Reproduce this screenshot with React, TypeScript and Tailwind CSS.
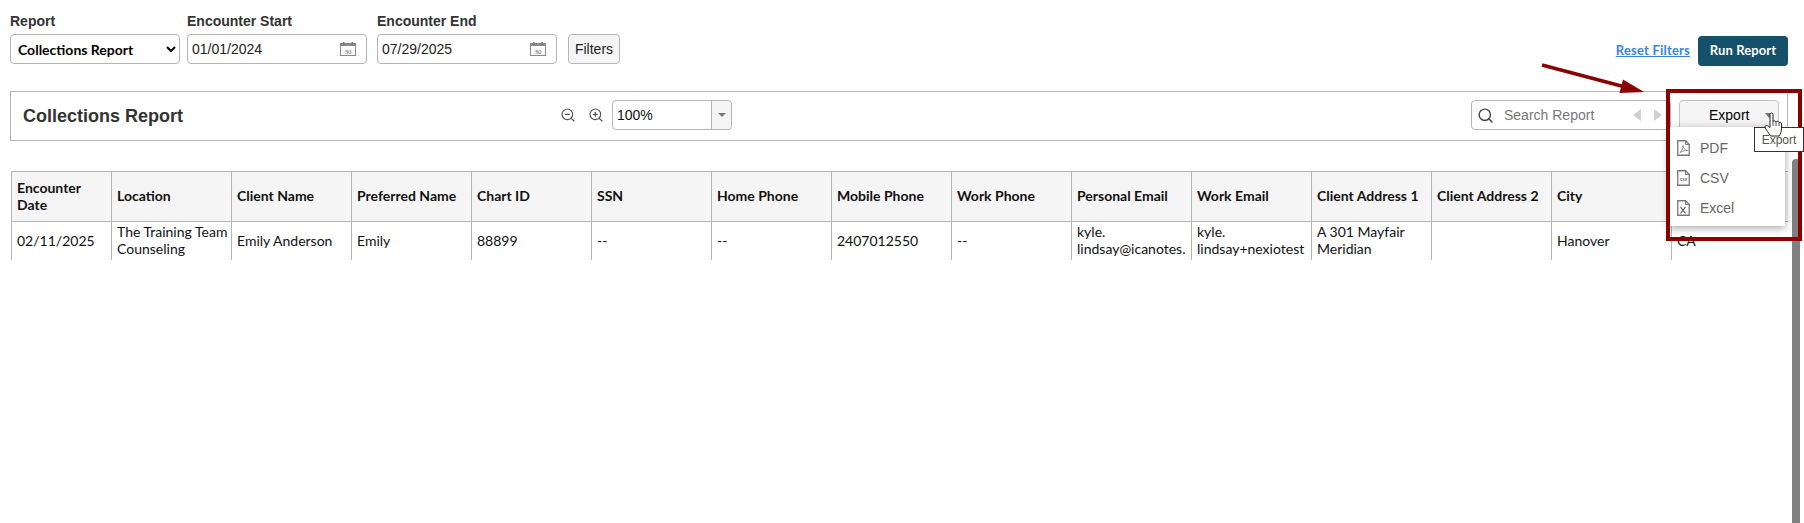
import { Search, ZoomIn, ZoomOut } from "lucide-react";

const columns = [
  "Encounter Date",
  "Location",
  "Client Name",
  "Preferred Name",
  "Chart ID",
  "SSN",
  "Home Phone",
  "Mobile Phone",
  "Work Phone",
  "Personal Email",
  "Work Email",
  "Client Address 1",
  "Client Address 2",
  "City",
  "",
];

const row = [
  ["02/11/2025"],
  ["The Training Team", "Counseling"],
  ["Emily Anderson"],
  ["Emily"],
  ["88899"],
  ["--"],
  ["--"],
  ["2407012550"],
  ["--"],
  ["kyle.", "lindsay@icanotes."],
  ["kyle.", "lindsay+nexiotest"],
  ["A 301 Mayfair", "Meridian"],
  [""],
  ["Hanover"],
  ["CA"],
];

const CalendarIcon = () => (
  <svg width="16" height="14" viewBox="0 0 16 14" className="shrink-0">
    <rect x="0.5" y="1.5" width="15" height="12" fill="#fff" stroke="#8a8a8a" />
    <rect x="0.5" y="1.5" width="15" height="2.5" fill="#8a8a8a" />
    <rect x="3" y="0" width="1.5" height="3" fill="#777" />
    <rect x="11.5" y="0" width="1.5" height="3" fill="#777" />
    <text x="8" y="11.5" textAnchor="middle" fontSize="7" fontFamily="Liberation Serif, serif" fill="#666">
      30
    </text>
  </svg>
);

const DateField = ({ label, value, className }: { label: string; value: string; className: string }) => (
  <div className={className}>
    <div className="h-[21px] text-[14px] leading-[17px] font-bold text-[#333]">{label}</div>
    <div className="flex h-[30px] w-[180px] items-center justify-between rounded-[4px] border border-[#b5b5b5] pl-[4px] pr-[10px] text-[14px] text-[#222]">
      {value}
      <CalendarIcon />
    </div>
  </div>
);

const FileIcon = ({ children }: { children: React.ReactNode }) => (
  <svg width="13" height="16" viewBox="0 0 13 16" className="shrink-0">
    <path d="M0.75 0.75H8.5L12.25 4.5V15.25H0.75Z" fill="#fff" stroke="#777" strokeWidth="1.3" />
    <path d="M8.5 0.75V4.5H12.25" fill="none" stroke="#777" />
    {children}
  </svg>
);

const App = () => {
  return (
    <div className="relative h-[523px] w-[1804px] overflow-hidden bg-white font-['Liberation_Sans',Arial,sans-serif]">
      <div className="flex items-end justify-between pl-[10px] pr-[16px] pt-[13px]">
        <div className="flex items-end">
          <div>
            <div className="h-[21px] text-[14px] leading-[17px] font-bold text-[#333]">Report</div>
            <select className="h-[30px] w-[170px] rounded-[4px] border border-[#b5b5b5] bg-white pl-[3px] font-['Lato',sans-serif] text-[14px] font-bold text-black">
              <option>Collections Report</option>
            </select>
          </div>
          <DateField label="Encounter Start" value="01/01/2024" className="ml-[7px]" />
          <DateField label="Encounter End" value="07/29/2025" className="ml-[10px]" />
          <button className="ml-[11px] h-[30px] w-[52px] rounded-[4px] border border-[#b5b5b5] bg-[#f5f5f5] text-[14px] text-[#222]">
            Filters
          </button>
        </div>
        <div className="mb-[-2px] flex items-center gap-[8px] font-['Lato',sans-serif]">
          <a className="text-[13px] font-bold tracking-[0.2px] text-[#3b82e0] underline">Reset Filters</a>
          <button className="h-[30px] w-[90px] rounded-[4px] bg-[#15516a] text-[13px] font-bold tracking-[0.1px] text-white">
            Run Report
          </button>
        </div>
      </div>

      <div className="ml-[10px] mt-[27px] flex h-[50px] w-[1778px] items-center border border-[#b5b5b5] pb-[2px] pl-[12px] pr-[8px]">
        <h2 className="w-[537px] pt-[2px] text-[18px] font-bold text-[#333]">Collections Report</h2>
        <ZoomOut size={16} strokeWidth={1.8} className="text-[#555]" />
        <ZoomIn size={16} strokeWidth={1.8} className="ml-[12px] text-[#555]" />
        <div className="ml-[8px] flex h-[30px] w-[120px] rounded-[4px] border border-[#b5b5b5] text-[14px] text-[#111]">
          <div className="flex flex-1 items-center pl-[4px]">100%</div>
          <div className="flex w-[20px] items-center justify-center rounded-r-[4px] border-l border-[#b5b5b5] bg-[#f5f5f5]">
            <div className="h-0 w-0 border-x-[4px] border-t-[4px] border-x-transparent border-t-[#777]" />
          </div>
        </div>
        <div className="ml-auto flex h-[30px] w-[200px] items-center rounded-[4px] border border-[#b5b5b5] pl-[5px] text-[14px] text-[#777]">
          <Search size={17} strokeWidth={2} className="text-[#444]" />
          <span className="ml-[10px]">Search Report</span>
          <div className="ml-auto mr-[13px] h-0 w-0 border-y-[6px] border-r-[8px] border-y-transparent border-r-[#d0d0d0]" />
          <div className="mr-[8px] h-0 w-0 border-y-[6px] border-l-[8px] border-y-transparent border-l-[#d0d0d0]" />
        </div>
        <button className="ml-[8px] flex h-[30px] w-[100px] items-center rounded-t-[4px] border border-[#c4c4c4] bg-[#f5f5f5] pl-[29px] text-[14px] text-black">
          Export
          <span className="ml-[16px] h-0 w-0 border-x-[4px] border-t-[5px] border-x-transparent border-t-[#777]" />
        </button>
      </div>

      <div className="ml-[11px] mt-[30px] h-[89px] w-[1777px] overflow-hidden font-['Lato',sans-serif] text-[14px] leading-[17px] text-[#111]">
        <table className="w-[1780px] table-fixed border-collapse">
          <colgroup>
            <col className="w-[100px]" />
            {columns.slice(1).map((c, i) => (
              <col key={i} className="w-[120px]" />
            ))}
          </colgroup>
          <thead>
            <tr className="h-[50px] bg-[#f5f5f5]">
              {columns.map((c, i) => (
                <th key={i} className="border border-[#b5b5b5] px-[5px] pb-[2px] text-left font-bold">
                  {c}
                </th>
              ))}
            </tr>
          </thead>
          <tbody>
            <tr className="h-[39px]">
              {row.map((lines, i) => (
                <td key={i} className="overflow-hidden whitespace-nowrap border border-[#b5b5b5] pb-[2px] pl-[5px]">
                  {lines.map((l) => (
                    <div key={l}>{l}</div>
                  ))}
                </td>
              ))}
            </tr>
          </tbody>
        </table>
      </div>

      {/* scrollbar */}
      <div className="absolute left-[1792px] top-[159px] h-[364px] w-[8px] rounded-t-[4px] bg-[#808080]" />

      {/* export menu */}
      <div className="absolute left-[1669px] top-[127px] flex h-[99px] w-[116px] flex-col justify-center gap-[14px] bg-white pl-[8px] pt-[3px] text-[14px] leading-[16px] text-[#666] shadow-[0_2px_8px_rgba(0,0,0,0.35)]">
        <div className="flex items-center gap-[10px]">
          <FileIcon>
            <path d="M3 12.5C5 11 6.5 7.5 6 5.5C6 8 8 10 10.5 10.5C8 10.5 5 11 3 12.5Z" fill="none" stroke="#777" strokeWidth="0.8" />
          </FileIcon>
          PDF
        </div>
        <div className="flex items-center gap-[10px]">
          <FileIcon>
            <text x="6.5" y="11" textAnchor="middle" fontSize="4.5" fontWeight="bold" fill="#666">
              csv
            </text>
          </FileIcon>
          CSV
        </div>
        <div className="flex items-center gap-[10px]">
          <FileIcon>
            <path d="M3.5 7L8.5 13.5M8.5 7L3.5 13.5" fill="none" stroke="#555" strokeWidth="1.2" />
          </FileIcon>
          Excel
        </div>
      </div>

      {/* annotation */}
      <div className="absolute left-[1666px] top-[89px] h-[152px] w-[136px] border-[4px] border-[#8b0000]" />
      <svg className="absolute left-[1535px] top-[60px]" width="115" height="40" viewBox="0 0 115 40">
        <path d="M7 5L94 28" stroke="#8b0000" strokeWidth="3.5" />
        <path d="M88 19.5L109 32L84.5 33Z" fill="#8b0000" />
      </svg>

      {/* tooltip and pointer */}
      <div className="absolute left-[1754px] top-[127px] flex h-[25px] w-[50px] items-center justify-center border border-[#333] bg-white text-[12px] text-[#555]">
        Export
      </div>
      <svg className="absolute left-[1764px] top-[112px]" width="20" height="25" viewBox="0 0 20 25">
        <path
          d="M6 2.5C6 0.5 9 0.5 9 2.5V9.5C9.5 8.5 11.5 8.5 12 10C12.5 9 14.5 9 15 10.5C16 10 17.5 10.5 17.5 12V17C17.5 20 16 22 15.5 24H6.5C5.5 21.5 1 17 1 15C1 13 3.5 13 6 15.5Z"
          fill="#fff"
          stroke="#222"
          strokeWidth="1"
        />
        <path d="M9 9.5V14M12 10V14M15 10.5V14" stroke="#222" strokeWidth="0.8" fill="none" />
      </svg>
    </div>
  );
};

export default App;
